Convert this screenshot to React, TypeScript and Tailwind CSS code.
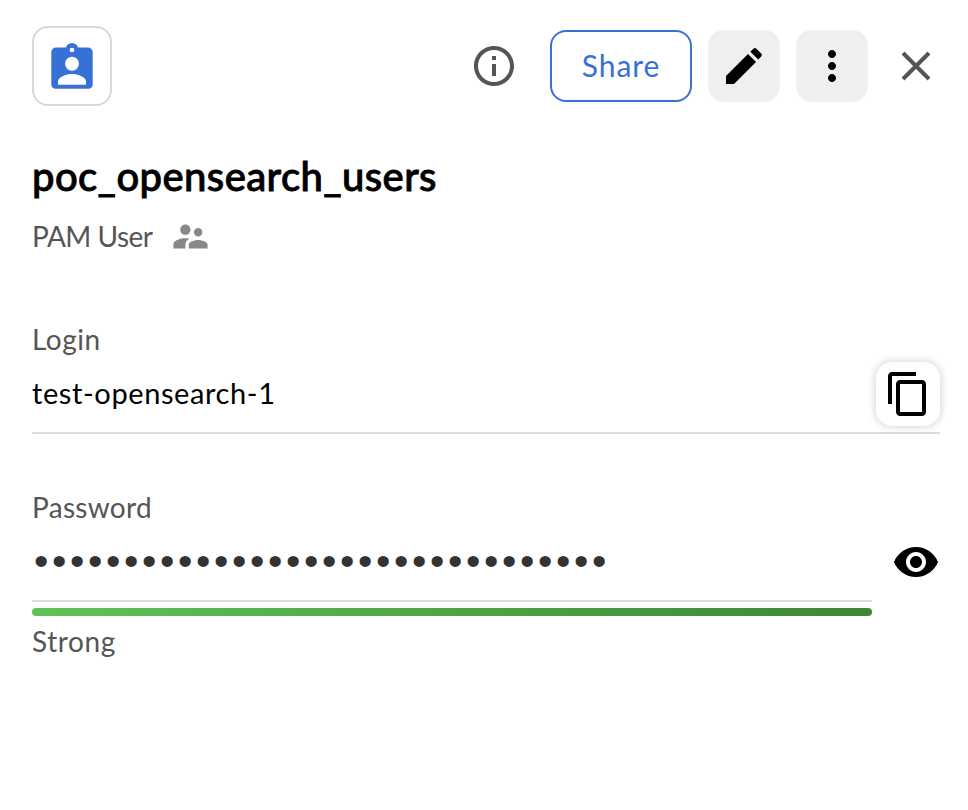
import type { ReactNode } from "react";

function RecordIcon() {
  return (
    <svg width="44" height="48" viewBox="50 42 44 48">
      <rect x="51.3" y="47.6" width="41.4" height="41.2" rx="4.4" fill="#3871d6" />
      <circle cx="72" cy="49.6" r="6.5" fill="#3871d6" />
      <circle cx="72" cy="50" r="2.3" fill="white" />
      <circle cx="72" cy="63.7" r="7" fill="white" />
      <path d="M58 84.7V81.6C58 76.6 67.3 74 72 74s14 2.6 14 7.6v3.1z" fill="white" />
    </svg>
  );
}

function Icon({ d, className = "size-12" }: { d: string; className?: string }) {
  return (
    <svg viewBox="0 0 24 24" fill="currentColor" className={className}>
      <path d={d} />
    </svg>
  );
}

const paths = {
  info: "M11 7h2v2h-2zm0 4h2v6h-2zm1-9C6.48 2 2 6.48 2 12s4.48 10 10 10 10-4.48 10-10S17.52 2 12 2zm0 18c-4.41 0-8-3.59-8-8s3.59-8 8-8 8 3.59 8 8-3.59 8-8 8z",
  edit: "M3 17v4h4L18 10l-4-4zM15.2 4.9l1.5-1.5q.8-.7 1.5 0l2.4 2.4q.7.8 0 1.5l-1.5 1.5z",
  more: "M12 8c1.1 0 2-.9 2-2s-.9-2-2-2-2 .9-2 2 .9 2 2 2zm0 2c-1.1 0-2 .9-2 2s.9 2 2 2 2-.9 2-2-.9-2-2-2zm0 6c-1.1 0-2 .9-2 2s.9 2 2 2 2-.9 2-2-.9-2-2-2z",
  people:
    "M16.5 12c1.38 0 2.49-1.12 2.49-2.5S17.88 7 16.5 7 14 8.12 14 9.5s1.12 2.5 2.5 2.5zM9 11c1.66 0 2.99-1.34 2.99-3S10.66 5 9 5 6 6.34 6 8s1.34 3 3 3zm7.5 3c-1.83 0-5.5.92-5.5 2.75V19h11v-2.25c0-1.83-3.67-2.75-5.5-2.75zM9 13c-2.33 0-7 1.17-7 3.5V19h7v-2.25c0-.85.33-2.34 2.37-3.47C10.5 13.1 9.66 13 9 13z",
  copy: "M16 1H4c-1.1 0-2 .9-2 2v14h2V3h12V1zm3 4H8c-1.1 0-2 .9-2 2v14c0 1.1.9 2 2 2h11c1.1 0 2-.9 2-2V7c0-1.1-.9-2-2-2zm0 16H8V7h11v14z",
  eye: "M12 4.5C7 4.5 2.73 7.61 1 12c1.73 4.39 6 7.5 11 7.5s9.27-3.11 11-7.5c-1.73-4.39-6-7.5-11-7.5zM12 17c-2.76 0-5-2.24-5-5s2.24-5 5-5 5 2.24 5 5-2.24 5-5 5zm0-8c-1.66 0-3 1.34-3 3s1.34 3 3 3 3-1.34 3-3-1.34-3-3-3z",
};

function ToolButton({ children }: { children: ReactNode }) {
  return <button className="flex size-[72px] items-center justify-center rounded-2xl bg-[#efefef] text-black">{children}</button>;
}

export default function App() {
  return (
    <main className="h-[810px] w-[968px] overflow-hidden bg-white pr-7 pl-8 font-['Lato',sans-serif] text-[28px] leading-10 whitespace-nowrap text-[#555] antialiased">
      <header className="flex h-[132px] items-center">
        <div className="flex size-20 items-center justify-center rounded-2xl border-2 border-[#d8d8d8]">
          <RecordIcon />
        </div>
        <div className="ml-auto flex items-center gap-4">
          <button className="mr-4 size-12">
            <Icon d={paths.info} />
          </button>
          <button className="flex h-[72px] w-[142px] items-center justify-center rounded-2xl border-2 border-[#3871d6] pb-0.5 text-[30px] tracking-[0.9px] text-[#3871d6]">
            Share
          </button>
          <ToolButton>
            <Icon d={paths.edit} />
          </ToolButton>
          <ToolButton>
            <Icon d={paths.more} />
          </ToolButton>
          <button className="ml-2 size-12">
            <svg viewBox="0 0 48 48" className="size-12" stroke="currentColor" strokeWidth="4">
              <path d="M11 11 37 37M37 11 11 37" />
            </svg>
          </button>
        </div>
      </header>

      <h1 className="mt-5 h-12 text-[40px] leading-[48px] font-medium tracking-[0.4px] text-black [-webkit-text-stroke:0.9px_black]">
        poc_opensearch_users
      </h1>
      <div className="mt-4 flex h-10 items-center">
        <span className="w-[138px] tracking-[-0.5px]">PAM User</span>
        <Icon d={paths.people} className="mt-px size-[41px] text-[#888]" />
      </div>

      <section className="mt-[63px] flex h-[115px] w-[908px] justify-between border-b-2 border-[#dcdcdc]">
        <div>
          <div className="h-10 tracking-[0.5px]">Login</div>
          <div className="mt-[14px] h-10 text-[29px] tracking-[0.6px] text-black">test-opensearch-1</div>
        </div>
        <button className="mt-[43px] flex size-16 items-center justify-center rounded-2xl bg-white text-black shadow-[0_0_10px_rgba(0,0,0,0.2)]">
          <Icon d={paths.copy} />
        </button>
      </section>

      <section className="mt-[53px] flex">
        <div className="w-[840px]">
          <div className="h-[115px] border-b-2 border-[#dcdcdc]">
            <div className="h-10 tracking-[0.3px]">Password</div>
            <div className="mt-[14px] h-10 pl-[2px] font-['Liberation_Sans',sans-serif] text-[41px] tracking-[3.65px] text-[#333]">
              ••••••••••••••••••••••••••••••••
            </div>
          </div>
          <div className="mt-1.5 h-2 rounded-full bg-linear-to-r from-[#60c356] to-[#3d8734]" />
          <div className="mt-[5px] h-10 tracking-[0.6px]">Strong</div>
        </div>
        <button className="mt-[51px] ml-5 size-12 text-black">
          <Icon d={paths.eye} />
        </button>
      </section>
    </main>
  );
}
